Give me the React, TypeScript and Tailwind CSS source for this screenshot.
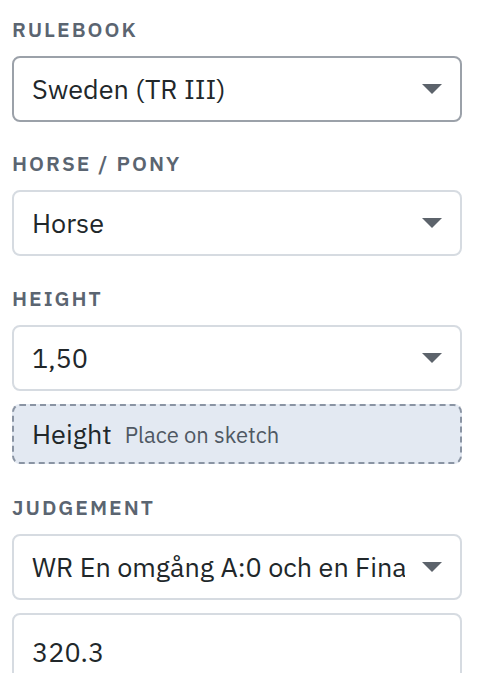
import React from "react";

const font = { fontFamily: '"IBM Plex Sans", "Noto Sans", "Liberation Sans", sans-serif' };

function Caret() {
  return (
    <svg width="20" height="10" viewBox="0 0 20 10" className="shrink-0">
      <path d="M0 0 H20 L10 10 Z" fill="#5c636b" />
    </svg>
  );
}

function Label({ children }: { children: React.ReactNode }) {
  return (
    <div className="text-[21px] leading-[24px] font-semibold tracking-[0.095em] text-[#5b6571] mb-[15px] whitespace-nowrap">
      {children}
    </div>
  );
}

function Select({ value, strong }: { value: string; strong?: boolean }) {
  return (
    <div
      className={`h-[66px] flex items-center rounded-[8px] border-2 bg-white pl-[18px] pr-[18px] ${
        strong ? "border-[#9ba1a9]" : "border-[#d6dbe1]"
      }`}
    >
      <span className="flex-1 min-w-0 text-[27px] text-[#21272a] whitespace-nowrap overflow-hidden mr-[17px]">
        {value}
      </span>
      <Caret />
    </div>
  );
}

export default function App() {
  return (
    <div className="bg-white min-h-[673px] pl-[12px] pr-[18px] pt-[17px]" style={font}>
      <div>
        <Label>RULEBOOK</Label>
        <Select value="Sweden (TR III)" strong />
      </div>
      <div className="mt-[29px]">
        <Label>HORSE / PONY</Label>
        <Select value="Horse" />
      </div>
      <div className="mt-[30px]">
        <Label>HEIGHT</Label>
        <Select value="1,50" />
        <div className="mt-[13px] h-[60px] flex items-center gap-[13px] rounded-[8px] border-2 border-dashed border-[#8a94a3] bg-[#e3e9f2] pl-[18px]">
          <span className="text-[27px] text-[#21272a]">Height</span>
          <span className="text-[22px] text-[#4f5863]">Place on sketch</span>
        </div>
      </div>
      <div className="mt-[31px]">
        <Label>JUDGEMENT</Label>
        <Select value="WR En omgång A:0 och en Final" />
        <div className="mt-[13px] h-[78px] flex items-center rounded-[8px] border-2 border-[#d6dbe1] bg-white pl-[18px]">
          <span className="text-[27px] text-[#21272a]">320.3</span>
        </div>
      </div>
    </div>
  );
}
